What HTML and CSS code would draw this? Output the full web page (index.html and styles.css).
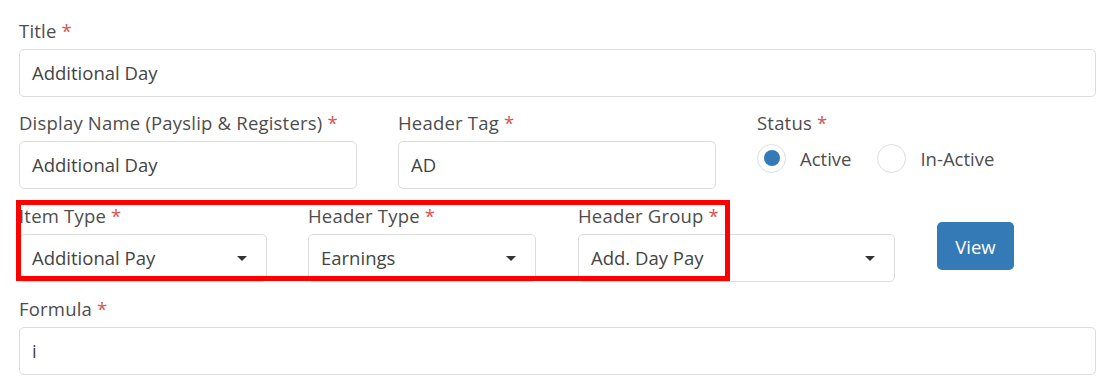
FILE: index.html
```html
<!DOCTYPE html>
<html lang="en">
    <head>
        <meta charset="UTF-8">
        <meta name="viewport" content="width=device-width, initial-scale=1.0">
        <title>Pay Item</title>
        <link rel="stylesheet" href="styles.css">
    </head>
    <body>
        <form class="pay-form">
            <div class="field">
                <label>Title <span class="req">*</span></label>
                <div class="input">Additional Day</div>
            </div>

            <div class="row">
                <div class="field w-display">
                    <label>Display Name (Payslip &amp; Registers) <span class="req">*</span></label>
                    <div class="input">Additional Day</div>
                </div>
                <div class="field w-tag">
                    <label>Header Tag <span class="req">*</span></label>
                    <div class="input">AD</div>
                </div>
                <div class="field">
                    <label>Status <span class="req">*</span></label>
                    <div class="radios">
                        <span class="radio checked"></span><span class="radio-text">Active</span>
                        <span class="radio"></span><span class="radio-text">In-Active</span>
                    </div>
                </div>
            </div>

            <div class="row row-types">
                <div class="field w-item">
                    <label>Item Type <span class="req">*</span></label>
                    <div class="input select">Additional Pay <span class="caret"></span></div>
                </div>
                <div class="field w-htype">
                    <label>Header Type <span class="req">*</span></label>
                    <div class="input select">Earnings <span class="caret"></span></div>
                </div>
                <div class="field w-group">
                    <label>Header Group <span class="req">*</span></label>
                    <div class="input select">Add. Day Pay <span class="caret"></span></div>
                </div>
                <button type="button" class="btn-view">View</button>
                <div class="highlight"></div>
            </div>

            <div class="field">
                <label>Formula <span class="req">*</span></label>
                <div class="input">i</div>
            </div>
        </form>
    </body>
</html>
```

FILE: styles.css
```css
body { margin: 0; background: #fff; font-family: "Open Sans", "Noto Sans", sans-serif; color: #4a4a4a; }
.pay-form { width: 1077px; padding: 19px 0 0 19px; }
.field { margin-bottom: 14px; }
.field > label { display: block; height: 24px; line-height: 24px; margin-bottom: 6px; font-size: 18.5px; color: #4d4d4d; letter-spacing: 0.2px; }
.req { color: #d9534f; }
.input { box-sizing: border-box; height: 48px; padding: 0 12px; border: 1px solid #ddd; border-radius: 5px; font-size: 18.5px; line-height: 46px; color: #444; background: #fff; }
.select { display: flex; justify-content: space-between; align-items: center; padding-right: 19px; }
.caret { width: 0; height: 0; border-left: 5.5px solid transparent; border-right: 5.5px solid transparent; border-top: 5px solid #333; }
.row { display: flex; gap: 41px; }
.row-types { position: relative; gap: 42px; margin-top: 1px; margin-bottom: 1px; }
.w-display { width: 338px; }
.w-tag { width: 318px; }
.w-item { width: 248px; margin-right: -1px; }
.w-htype { width: 228px; }
.w-group { width: 317px; }
.radios { display: flex; align-items: center; height: 30px; margin-top: 8px; font-size: 18.5px; }
.radio { box-sizing: border-box; width: 29px; height: 29px; border: 1px solid #ddd; border-radius: 50%; display: flex; align-items: center; justify-content: center; }
.radio.checked::after { content: ""; width: 16px; height: 16px; border-radius: 50%; background: #337ab7; }
.radio-text { margin: 0 26px 0 14px; color: #4d4d4d; }
.btn-view { align-self: flex-start; margin-top: 18px; width: 77px; height: 48px; border: 0; border-radius: 5px; background: #337ab7; color: #fff; font-family: inherit; font-size: 18.5px; }
.highlight { position: absolute; left: -3px; top: -4px; width: 714px; height: 81px; box-sizing: border-box; border: 5px solid #f00; pointer-events: none; }
```
